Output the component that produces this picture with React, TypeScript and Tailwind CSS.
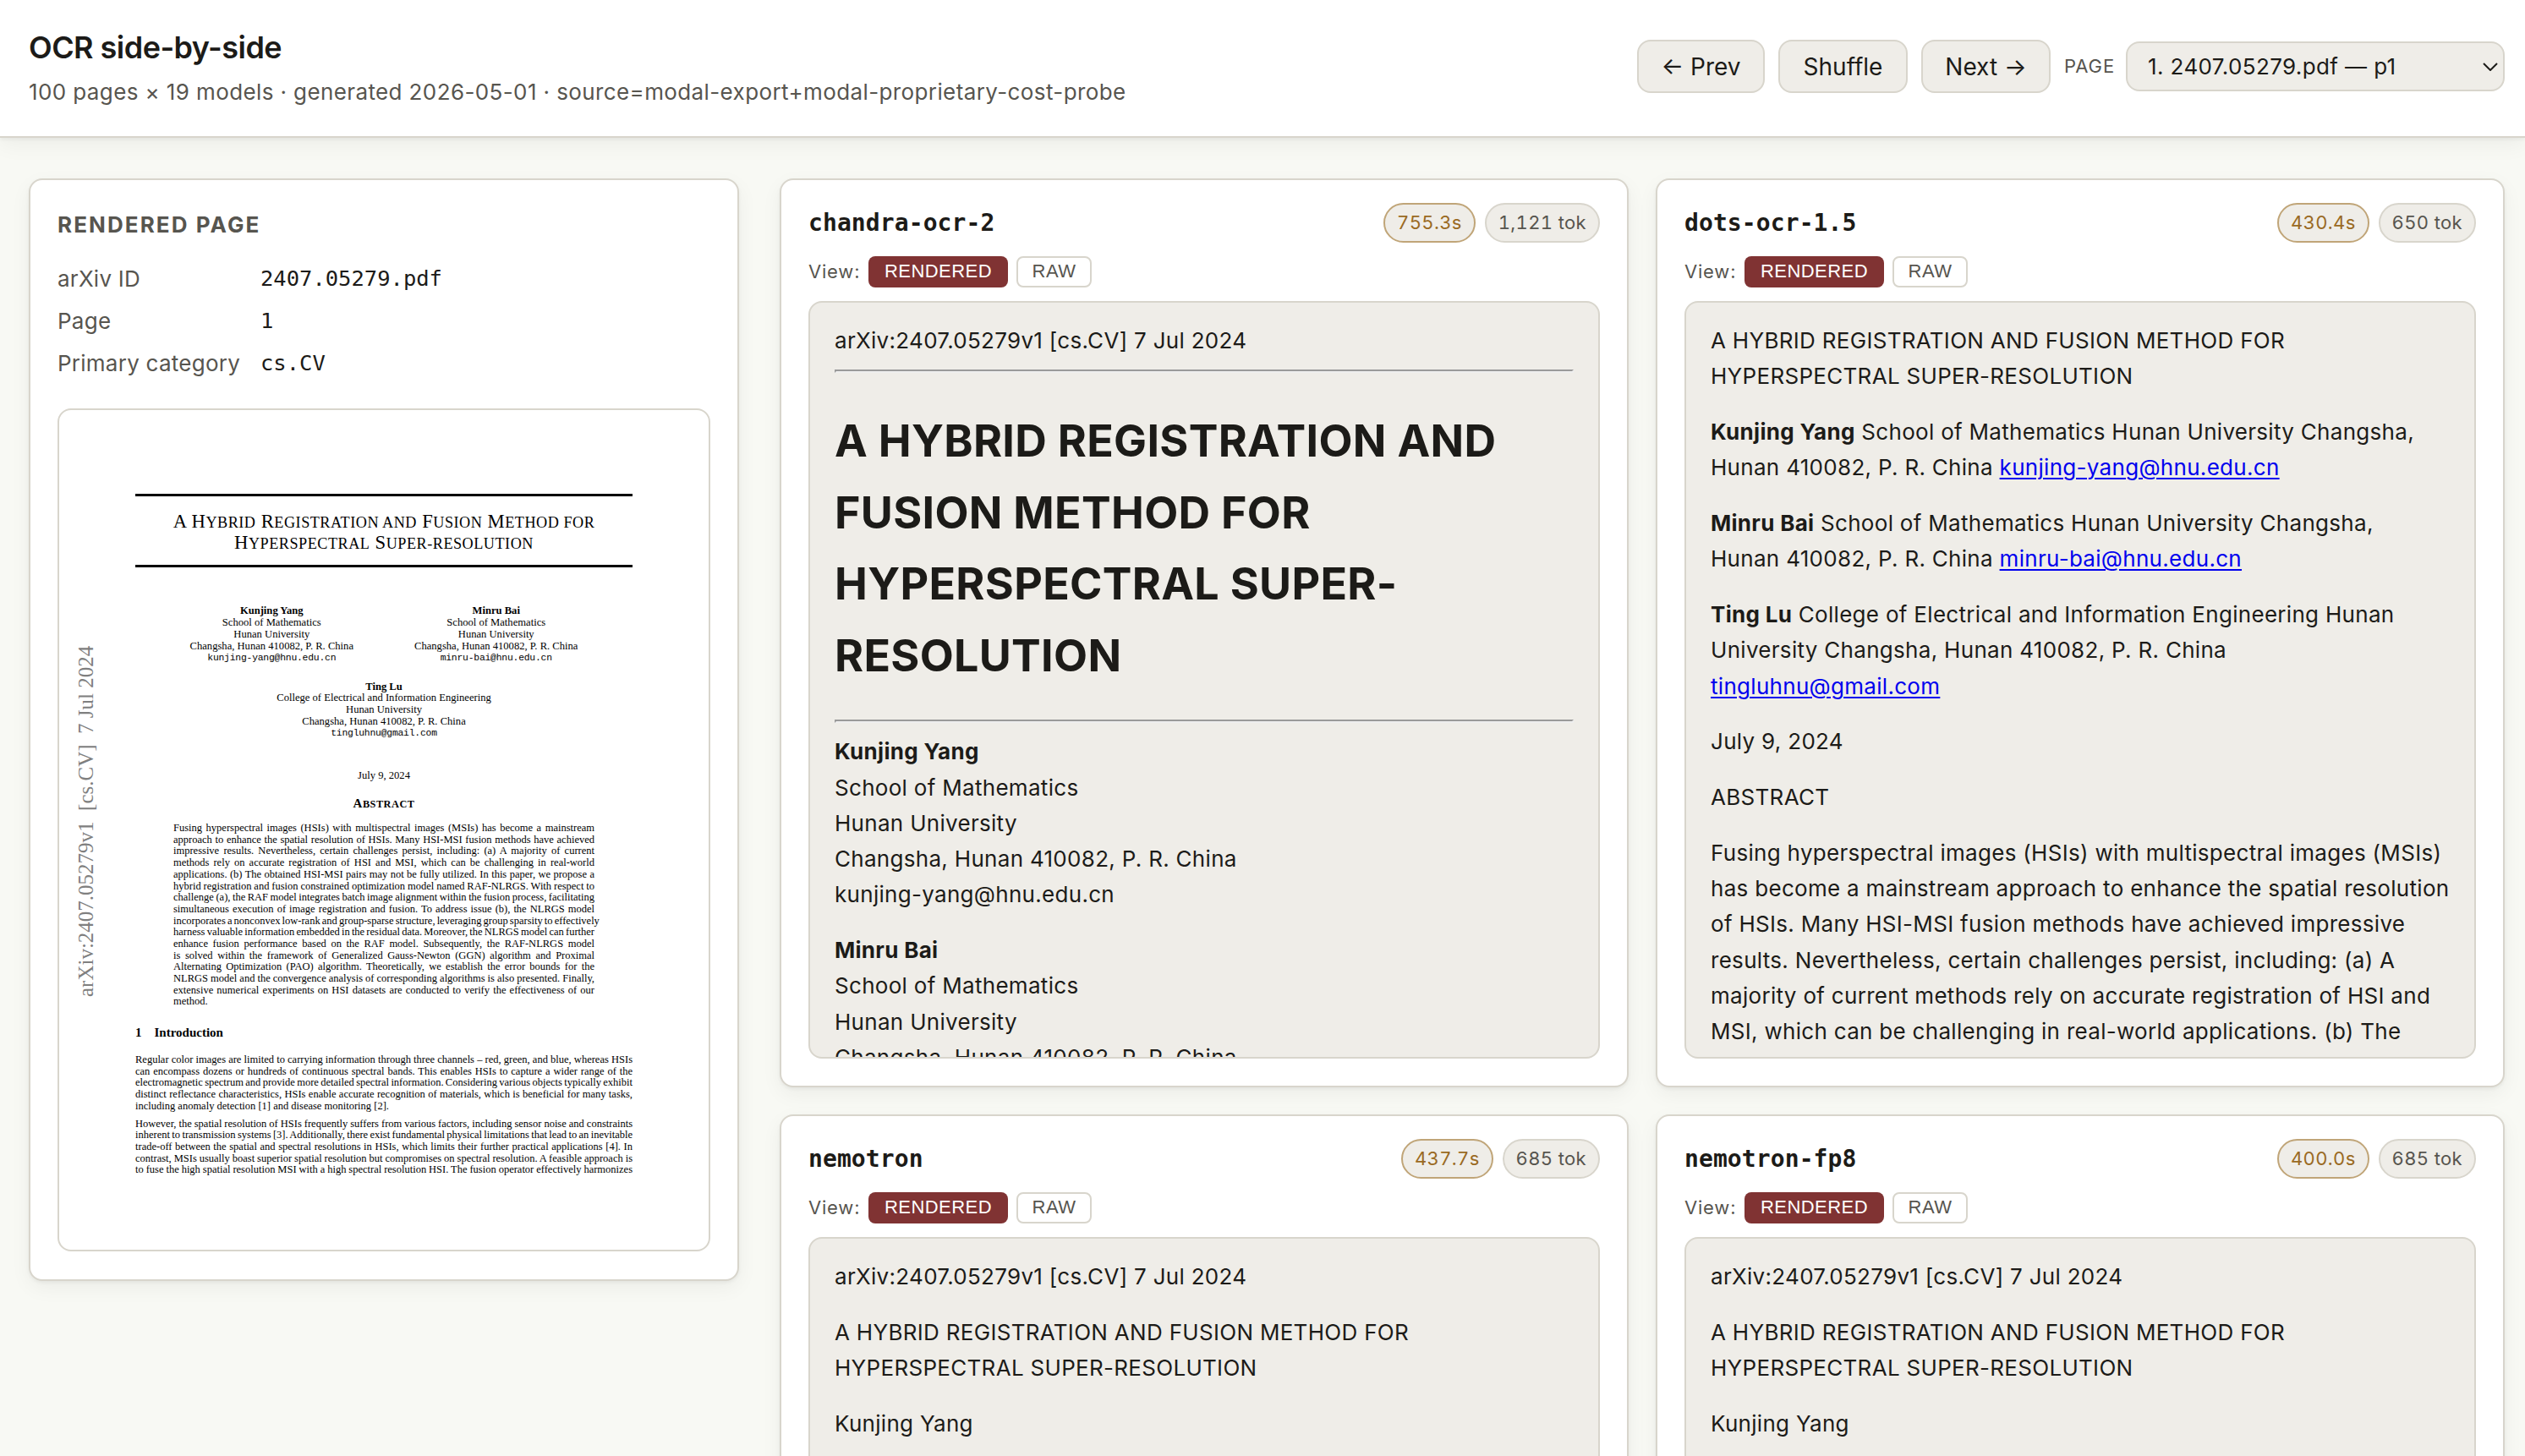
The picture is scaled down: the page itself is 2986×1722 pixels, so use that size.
import React from 'react';

type Block = { kind: 'p' | 'h1' | 'hr'; body?: React.ReactNode };

interface ModelResult {
  name: string;
  seconds: string;
  tokens: string;
  blocks: Block[];
}

const Link = ({ children }: { children: string }) => (
  <a className="text-[#0000ee] underline decoration-2 underline-offset-[3px]">{children}</a>
);

const nemotronBlocks: Block[] = [
  { kind: 'p', body: 'arXiv:2407.05279v1 [cs.CV] 7 Jul 2024' },
  { kind: 'p', body: 'A HYBRID REGISTRATION AND FUSION METHOD FOR HYPERSPECTRAL SUPER-RESOLUTION' },
  { kind: 'p', body: 'Kunjing Yang' },
];

const results: ModelResult[] = [
  {
    name: 'chandra-ocr-2',
    seconds: '755.3s',
    tokens: '1,121 tok',
    blocks: [
      { kind: 'p', body: 'arXiv:2407.05279v1 [cs.CV] 7 Jul 2024' },
      { kind: 'hr' },
      { kind: 'h1', body: 'A HYBRID REGISTRATION AND FUSION METHOD FOR HYPERSPECTRAL SUPER-RESOLUTION' },
      { kind: 'hr' },
      {
        kind: 'p',
        body: (
          <>
            <b>Kunjing Yang</b><br />School of Mathematics<br />Hunan University<br />
            Changsha, Hunan 410082, P. R. China<br />kunjing-yang@hnu.edu.cn
          </>
        ),
      },
      {
        kind: 'p',
        body: (
          <>
            <b>Minru Bai</b><br />School of Mathematics<br />Hunan University<br />
            Changsha, Hunan 410082, P. R. China
          </>
        ),
      },
    ],
  },
  {
    name: 'dots-ocr-1.5',
    seconds: '430.4s',
    tokens: '650 tok',
    blocks: [
      { kind: 'p', body: 'A HYBRID REGISTRATION AND FUSION METHOD FOR HYPERSPECTRAL SUPER-RESOLUTION' },
      {
        kind: 'p',
        body: (
          <>
            <b>Kunjing Yang</b> School of Mathematics Hunan University Changsha, Hunan 410082, P. R. China{' '}
            <Link>kunjing-yang@hnu.edu.cn</Link>
          </>
        ),
      },
      {
        kind: 'p',
        body: (
          <>
            <b>Minru Bai</b> School of Mathematics Hunan University Changsha,<br />Hunan 410082, P. R. China{' '}
            <Link>minru-bai@hnu.edu.cn</Link>
          </>
        ),
      },
      {
        kind: 'p',
        body: (
          <>
            <b>Ting Lu</b> College of Electrical and Information Engineering Hunan University Changsha, Hunan 410082, P. R.
            China<br /><Link>tingluhnu@gmail.com</Link>
          </>
        ),
      },
      { kind: 'p', body: 'July 9, 2024' },
      { kind: 'p', body: 'ABSTRACT' },
      {
        kind: 'p',
        body: 'Fusing hyperspectral images (HSIs) with multispectral images (MSIs) has become a mainstream approach to enhance the spatial resolution of HSIs. Many HSI-MSI fusion methods have achieved impressive results. Nevertheless, certain challenges persist, including: (a) A majority of current methods rely on accurate registration of HSI and MSI, which can be challenging in real-world applications. (b) The',
      },
    ],
  },
  { name: 'nemotron', seconds: '437.7s', tokens: '685 tok', blocks: nemotronBlocks },
  { name: 'nemotron-fp8', seconds: '400.0s', tokens: '685 tok', blocks: nemotronBlocks },
];

// Line breaks follow the typeset PDF, so every line is justified on its own.
const abstractLines = [
  'Fusing hyperspectral images (HSIs) with multispectral images (MSIs) has become a mainstream',
  'approach to enhance the spatial resolution of HSIs. Many HSI-MSI fusion methods have achieved',
  'impressive results. Nevertheless, certain challenges persist, including: (a) A majority of current',
  'methods rely on accurate registration of HSI and MSI, which can be challenging in real-world',
  'applications. (b) The obtained HSI-MSI pairs may not be fully utilized. In this paper, we propose a',
  'hybrid registration and fusion constrained optimization model named RAF-NLRGS. With respect to',
  'challenge (a), the RAF model integrates batch image alignment within the fusion process, facilitating',
  'simultaneous execution of image registration and fusion. To address issue (b), the NLRGS model',
  'incorporates a nonconvex low-rank and group-sparse structure, leveraging group sparsity to effectively',
  'harness valuable information embedded in the residual data. Moreover, the NLRGS model can further',
  'enhance fusion performance based on the RAF model. Subsequently, the RAF-NLRGS model',
  'is solved within the framework of Generalized Gauss-Newton (GGN) algorithm and Proximal',
  'Alternating Optimization (PAO) algorithm. Theoretically, we establish the error bounds for the',
  'NLRGS model and the convergence analysis of corresponding algorithms is also presented. Finally,',
  'extensive numerical experiments on HSI datasets are conducted to verify the effectiveness of our',
  'method.',
];

const introLines = [
  'Regular color images are limited to carrying information through three channels – red, green, and blue, whereas HSIs',
  'can encompass dozens or hundreds of continuous spectral bands. This enables HSIs to capture a wider range of the',
  'electromagnetic spectrum and provide more detailed spectral information. Considering various objects typically exhibit',
  'distinct reflectance characteristics, HSIs enable accurate recognition of materials, which is beneficial for many tasks,',
  'including anomaly detection [1] and disease monitoring [2].',
];

const secondLines = [
  'However, the spatial resolution of HSIs frequently suffers from various factors, including sensor noise and constraints',
  'inherent to transmission systems [3]. Additionally, there exist fundamental physical limitations that lead to an inevitable',
  'trade-off between the spatial and spectral resolutions in HSIs, which limits their further practical applications [4]. In',
  'contrast, MSIs usually boast superior spatial resolution but compromises on spectral resolution. A feasible approach is',
  'to fuse the high spatial resolution MSI with a high spectral resolution HSI. The fusion operator effectively harmonizes',
];

const Lines = ({ lines, openEnd = false }: { lines: string[]; openEnd?: boolean }) => (
  <>
    {lines.map((line, i) => {
      const last = i === lines.length - 1 && !openEnd;
      return (
        <div key={i} className={last ? 'whitespace-nowrap' : 'whitespace-nowrap [text-align-last:justify] [word-spacing:-1px]'}>
          {line}
        </div>
      );
    })}
  </>
);

const Author = ({ name, lines, email }: { name: string; lines: string[]; email: string }) => (
  <div className="text-center text-[12.6px] leading-[13.9px]">
    <div className="font-bold">{name}</div>
    {lines.map((line) => <div key={line}>{line}</div>)}
    <div className="font-['Liberation_Mono',monospace] text-[11.4px] tracking-[-0.02em]">{email}</div>
  </div>
);

const PdfPage = () => (
  <div className="relative mt-[32px] h-[997px] rounded-[16px] border-2 border-[#d8d5cc] bg-white px-[90px] pt-[99px] font-['Liberation_Serif',serif] text-black">
    <div className="absolute left-[17px] top-[270px] h-[424px] w-[30px] rotate-180 whitespace-pre text-[25px] leading-[30px] text-[#7f7f7f] [writing-mode:vertical-rl]">
      arXiv:2407.05279v1  [cs.CV]  7 Jul 2024
    </div>
    <div className="h-[87px] border-y-[3px] border-black pt-[18px] text-center text-[22.7px] leading-[24.5px] tracking-[0.5px] [&_span]:text-[18.2px] [&_span]:leading-none">
      <div>A H<span>YBRID</span> R<span>EGISTRATION AND</span> F<span>USION</span> M<span>ETHOD FOR</span></div>
      <div>H<span>YPERSPECTRAL</span> S<span>UPER-RESOLUTION</span></div>
    </div>
    <div className="mt-[45px] flex justify-center gap-[72px]">
      <Author name="Kunjing Yang" lines={['School of Mathematics', 'Hunan University', 'Changsha, Hunan 410082, P. R. China']} email="kunjing-yang@hnu.edu.cn" />
      <Author name="Minru Bai" lines={['School of Mathematics', 'Hunan University', 'Changsha, Hunan 410082, P. R. China']} email="minru-bai@hnu.edu.cn" />
    </div>
    <div className="mt-[20px]">
      <Author name="Ting Lu" lines={['College of Electrical and Information Engineering', 'Hunan University', 'Changsha, Hunan 410082, P. R. China']} email="tingluhnu@gmail.com" />
    </div>
    <div className="mt-[35px] text-center text-[12.6px] leading-[14px]">July 9, 2024</div>
    <div className="mt-[18px] text-center text-[15px] font-bold leading-[16px] tracking-[0.5px]">A<span className="text-[12.3px] leading-none">BSTRACT</span></div>
    <div className="mx-[45px] mt-[15px] text-[12.5px] leading-[13.68px]"><Lines lines={abstractLines} /></div>
    <div className="mt-[20px] text-[15px] font-bold leading-[18px]">1<span className="ml-[15px]">Introduction</span></div>
    <div className="mt-[17px] text-[12.5px] leading-[13.68px]"><Lines lines={introLines} /></div>
    <div className="mt-[7px] text-[12.5px] leading-[13.68px]"><Lines lines={secondLines} openEnd /></div>
  </div>
);

const ModelCard = ({ result }: { result: ModelResult }) => (
  <article className="h-[1075px] rounded-[16px] border-2 border-[#d8d5cc] bg-white px-8 pt-[27px] shadow-[0_2px_4px_rgba(28,27,24,0.05),0_8px_24px_rgba(28,27,24,0.05)]">
    <div className="flex h-[47px] items-center justify-between">
      <h3 className="font-['DejaVu_Sans_Mono',monospace] text-[28px] font-bold leading-[44px] tracking-[0.1px]">{result.name}</h3>
      <div className="flex gap-[11px] text-[22px] leading-[35px] tracking-[0.35px] tabular-nums">
        <span className="rounded-full border-2 border-[#c0a578] bg-[#efede8] px-[14px] py-[4px] text-[#9a6a23]">{result.seconds}</span>
        <span className="rounded-full border-2 border-[#d8d5cc] bg-[#efede8] px-[14px] py-[4px] text-[#57554f]">{result.tokens}</span>
      </div>
    </div>
    <div className="mt-4 flex h-[37px] items-center text-[22px] leading-[37px] text-[#57554f]">
      <span className="w-[71px] tracking-[0.8px]">View:</span>
      <button className="h-[37px] w-[165px] rounded-[8px] bg-[#803333] pb-[2px] font-['Liberation_Sans',sans-serif] text-[22px] leading-[35px] tracking-[0.44px] text-white">RENDERED</button>
      <button className="ml-[10px] h-[37px] w-[89px] rounded-[8px] border-2 border-[#d8d5cc] pb-[2px] font-['Liberation_Sans',sans-serif] text-[22px] leading-[31px] tracking-[0.44px]">RAW</button>
    </div>
    <div className="mt-4 h-[896px] overflow-hidden rounded-[16px] border-2 border-[#d8d5cc] bg-[#efede8] px-[29px] pt-[24px] text-[26px] leading-[42.25px] tracking-[0.3px]">
      {result.blocks.map((block, i) => {
        if (block.kind === 'hr') {
          return <hr key={i} className="my-[13px] h-[4px] border-2 border-b-[#eeeeee] border-l-[#9a9a9a] border-r-[#eeeeee] border-t-[#9a9a9a]" />;
        }
        if (block.kind === 'h1') {
          return <h1 key={i} className="mb-[33px] mt-[39px] text-[52px] font-bold leading-[84.5px] tracking-[0.3px]">{block.body}</h1>;
        }
        // a rule sits closer to the text above it than the next paragraph does
        const beforeRule = result.blocks[i + 1]?.kind === 'hr';
        return <p key={i} className={beforeRule ? 'mb-[13px]' : 'mb-[23.5px]'}>{block.body}</p>;
      })}
    </div>
  </article>
);

const meta = [
  ['arXiv ID', '2407.05279.pdf'],
  ['Page', '1'],
  ['Primary category', 'cs.CV'],
];

export default function App() {
  return (
    <div className="h-[1722px] overflow-hidden bg-[#f8f9f4] font-[Inter,sans-serif] text-[#1c1b18]">
      <header className="flex h-[163px] items-center justify-between border-b-2 border-[#d8d5cc] bg-white pb-[4px] pl-[34px] pr-6 shadow-[0_2px_4px_rgba(28,27,24,0.05),0_8px_24px_rgba(28,27,24,0.05)]">
        <div className="pt-[3px]">
          <h1 className="text-[36px] font-semibold leading-[50px] tracking-[-0.015em]">OCR side-by-side</h1>
          <p className="mt-[7px] text-[26px] leading-[42px] tracking-[0.39px] text-[#57554f]">100 pages × 19 models · generated 2026-05-01 · source=modal-export+modal-proprietary-cost-probe</p>
        </div>
        <div className="flex items-center gap-4 text-[28px]">
          <button className="h-[63px] w-[151px] rounded-[16px] border-2 border-[#d8d5cc] bg-[#efede8]">← Prev</button>
          <button className="h-[63px] w-[153px] rounded-[16px] border-2 border-[#d8d5cc] bg-[#efede8]">Shuffle</button>
          <button className="h-[63px] w-[153px] rounded-[16px] border-2 border-[#d8d5cc] bg-[#efede8]">Next →</button>
          <span className="w-[57px] whitespace-nowrap text-[22px] tracking-[0.04em] text-[#57554f]">PAGE</span>
          <div className="flex h-[59px] w-[448px] items-center justify-between rounded-[16px] border-2 border-[#d8d5cc] bg-[#efede8] pl-[24px] pr-[6px] text-[26px] tracking-[0.39px]">
            1. 2407.05279.pdf — p1
            <svg viewBox="0 0 18 10" className="h-[10px] w-[18px]" fill="none" stroke="currentColor" strokeWidth="2"><path d="M1 1l8 8 8-8" /></svg>
          </div>
        </div>
      </header>
      <main className="flex items-start gap-12 pl-[34px] pr-6 pt-12">
        <aside className="h-[1304px] w-[840px] shrink-0 rounded-[16px] border-2 border-[#d8d5cc] bg-white px-8 pt-8 shadow-[0_2px_4px_rgba(28,27,24,0.05),0_8px_24px_rgba(28,27,24,0.05)]">
          <h2 className="text-[26px] font-bold leading-[42px] tracking-[0.08em] text-[#57554f]">RENDERED PAGE</h2>
          <dl className="mt-[22px] grid grid-cols-[240px_1fr] gap-y-[8px] text-[26px] leading-[42px]">
            {meta.map(([label, value]) => (
              <React.Fragment key={label}>
                <dt className="tracking-[0.25px] text-[#57554f]">{label}</dt>
                <dd className="-mt-px mb-px font-['DejaVu_Sans_Mono',monospace] text-[25.5px]">{value}</dd>
              </React.Fragment>
            ))}
          </dl>
          <PdfPage />
        </aside>
        <section className="grid flex-1 grid-cols-2 gap-8">
          {results.map((result) => <ModelCard key={result.name} result={result} />)}
        </section>
      </main>
    </div>
  );
}
